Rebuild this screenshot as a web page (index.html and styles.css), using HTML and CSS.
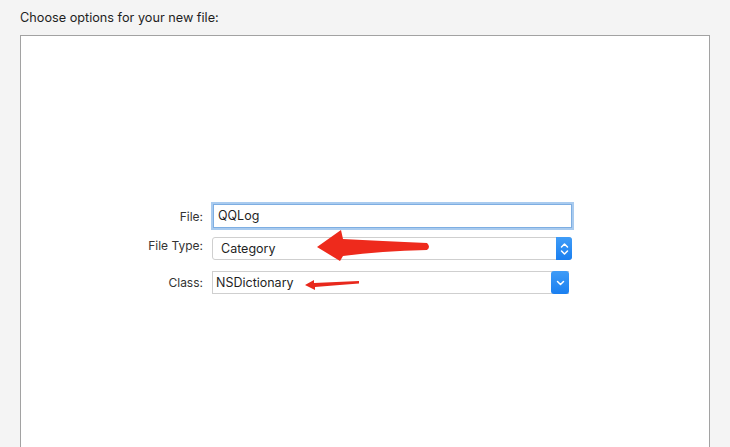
FILE: index.html
```html
<!DOCTYPE html>
<html lang="en">
<head>
    <meta charset="UTF-8">
    <title>Choose options</title>
    <link rel="stylesheet" href="styles.css">
</head>
<body>
    <p class="title">Choose options for your new file:</p>
    <div class="panel">
        <div class="form">
            <label class="lbl">File:</label>
            <div class="text_field">QQLog</div>

            <label class="lbl">File Type:</label>
            <div class="popup">
                <span class="popup_text">Category</span>
                <span class="stepper">
                    <svg width="9" height="14" viewBox="0 0 9 14"><path d="M1.5 5 L4.5 2 L7.5 5 M1.5 9 L4.5 12 L7.5 9" fill="none" stroke="#fff" stroke-width="1.5" stroke-linecap="round" stroke-linejoin="round"/></svg>
                </span>
            </div>

            <label class="lbl lbl_class">Class:</label>
            <div class="combo">
                <span class="combo_text">NSDictionary</span>
                <span class="combo_btn">
                    <svg width="9" height="6" viewBox="0 0 9 6"><path d="M1.5 1.5 L4.5 4.5 L7.5 1.5" fill="none" stroke="#fff" stroke-width="1.5" stroke-linecap="round" stroke-linejoin="round"/></svg>
                </span>
            </div>
        </div>

        <!-- red arrows drawn on top of the screenshot -->
        <svg class="arrows" width="689" height="300" viewBox="0 0 689 300">
            <path d="M296 211 L320 194 L322 203 Q360 205 406 207 Q410 211 406 214 Q360 215 322 220 L319 225 Z" fill="#ee2a1c"/>
            <path d="M284 249 L293 244 L293 247 Q315 246 338 245 L338 247.5 Q315 249 294 251 L294 254 Z" fill="#e8281c"/>
        </svg>
    </div>
</body>
</html>
```

FILE: styles.css
```css
body{
    margin: 0;
    background-color: #f4f4f4;
    font-family: Inter, "Noto Sans", sans-serif;
    font-size: 12.5px;
    color: #1f1f1f;
    overflow: hidden;
}
.title{
    margin: 0;
    padding: 10px 0 0 20px;
    height: 35px;
    box-sizing: border-box;
    line-height: 16px;
    font-size: 12.7px;
}
.panel{
    position: relative;
    margin-left: 20px;
    width: 690px;
    height: 420px;
    box-sizing: border-box;
    background-color: #fff;
    border: 1px solid #a2a2a2;
    border-bottom: none;
}
.form{
    display: grid;
    grid-template-columns: 182px 363px;
    column-gap: 8px;
    row-gap: 0;
    margin-top: 166px;
    align-items: center;
}
.lbl{
    text-align: right;
    color: #333;
    font-size: 12px;
}
.text_field{
    height: 24px;
    margin: 2px 0;
    width: 359px;
    box-sizing: border-box;
    margin-left: 2px;
    border: 1px solid #7eaee2;
    box-shadow: 0 0 0 2px #a9cbef;
    padding-left: 4px;
    line-height: 22px;
}
.popup{
    display: flex;
    margin-top: 7px;
    margin-left: 1px;
    width: 360px;
    height: 23px;
    box-sizing: border-box;
    border: 1px solid #cfcfcf;
    border-radius: 3px;
    background-color: #fff;
}
.popup_text{
    flex: 1;
    padding-left: 8px;
    line-height: 21px;
}
.stepper{
    width: 16px;
    margin: -1px -1px -1px 0;
    border-radius: 0 3px 3px 0;
    background: linear-gradient(#3f9cf7, #1a7ff0);
    display: flex;
    align-items: center;
    justify-content: center;
}
.lbl_class{
    margin-top: 11px;
}
.combo{
    display: flex;
    margin-top: 11px;
    margin-left: 1px;
    width: 357px;
    height: 23px;
    box-sizing: border-box;
    border: 1px solid #cfcfcf;
    border-right: none;
    background-color: #fff;
}
.combo_text{
    flex: 1;
    padding-left: 3px;
    line-height: 21px;
}
.combo_btn{
    width: 18px;
    margin: -1px 0;
    border-radius: 3px;
    background: linear-gradient(#3f9cf7, #1a7ff0);
    display: flex;
    align-items: center;
    justify-content: center;
}
.arrows{
    position: absolute;
    left: 0;
    top: 0;
    pointer-events: none;
}
```
